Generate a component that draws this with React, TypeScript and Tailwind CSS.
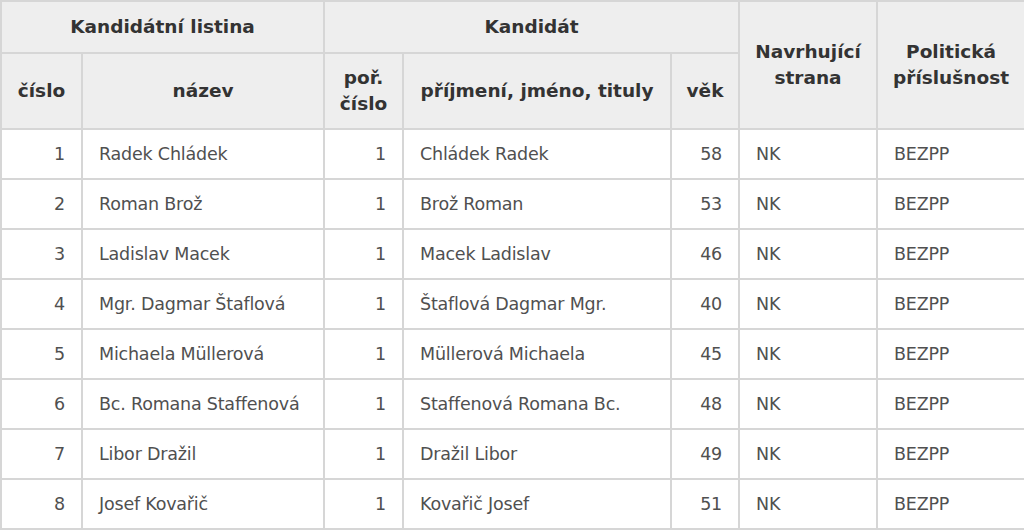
import React from "react";

type Candidate = {
	no: number;
	listName: string;
	order: number;
	fullName: string;
	age: number;
	party: string;
	affiliation: string;
};

const candidates: Candidate[] = [
	{ no: 1, listName: "Radek Chládek", order: 1, fullName: "Chládek Radek", age: 58, party: "NK", affiliation: "BEZPP" },
	{ no: 2, listName: "Roman Brož", order: 1, fullName: "Brož Roman", age: 53, party: "NK", affiliation: "BEZPP" },
	{ no: 3, listName: "Ladislav Macek", order: 1, fullName: "Macek Ladislav", age: 46, party: "NK", affiliation: "BEZPP" },
	{ no: 4, listName: "Mgr. Dagmar Štaflová", order: 1, fullName: "Štaflová Dagmar Mgr.", age: 40, party: "NK", affiliation: "BEZPP" },
	{ no: 5, listName: "Michaela Müllerová", order: 1, fullName: "Müllerová Michaela", age: 45, party: "NK", affiliation: "BEZPP" },
	{ no: 6, listName: "Bc. Romana Staffenová", order: 1, fullName: "Staffenová Romana Bc.", age: 48, party: "NK", affiliation: "BEZPP" },
	{ no: 7, listName: "Libor Dražil", order: 1, fullName: "Dražil Libor", age: 49, party: "NK", affiliation: "BEZPP" },
	{ no: 8, listName: "Josef Kovařič", order: 1, fullName: "Kovařič Josef", age: 51, party: "NK", affiliation: "BEZPP" },
];

const th = "border-2 border-[#d6d6d6] bg-[#eeeeee] px-2 text-center align-middle font-bold text-[#333333] text-[18.5px] tracking-normal leading-[26px]";
const td = "border-2 border-[#d6d6d6] px-4 align-middle h-[50px] text-[17.5px] tracking-[-0.2px]";

export default function App() {
	return (
		<div className="w-[1024px] bg-white font-['DejaVu_Sans',sans-serif]">
			<table className="w-[1024px] table-fixed border-collapse">
				<colgroup>
					<col className="w-[81px]" />
					<col className="w-[242px]" />
					<col className="w-[79px]" />
					<col className="w-[268px]" />
					<col className="w-[68px]" />
					<col className="w-[138px]" />
					<col className="w-[148px]" />
				</colgroup>
				<thead>
					<tr className="h-[52px]">
						<th colSpan={2} className={th}>Kandidátní listina</th>
						<th colSpan={3} className={th}>Kandidát</th>
						<th rowSpan={2} className={th}>Navrhující<br />strana</th>
						<th rowSpan={2} className={th}>Politická<br />příslušnost</th>
					</tr>
					<tr className="h-[76px]">
						<th className={th}>číslo</th>
						<th className={th}>název</th>
						<th className={th}>poř.<br />číslo</th>
						<th className={th}>příjmení, jméno, tituly</th>
						<th className={th}>věk</th>
					</tr>
				</thead>
				<tbody className="text-[#505050]">
					{candidates.map((c) => (
						<tr key={c.no}>
							<td className={`${td} text-right`}>{c.no}</td>
							<td className={`${td} text-left`}>{c.listName}</td>
							<td className={`${td} text-right`}>{c.order}</td>
							<td className={`${td} text-left`}>{c.fullName}</td>
							<td className={`${td} text-right`}>{c.age}</td>
							<td className={`${td} text-left`}>{c.party}</td>
							<td className={`${td} text-left`}>{c.affiliation}</td>
						</tr>
					))}
				</tbody>
			</table>
		</div>
	);
}
